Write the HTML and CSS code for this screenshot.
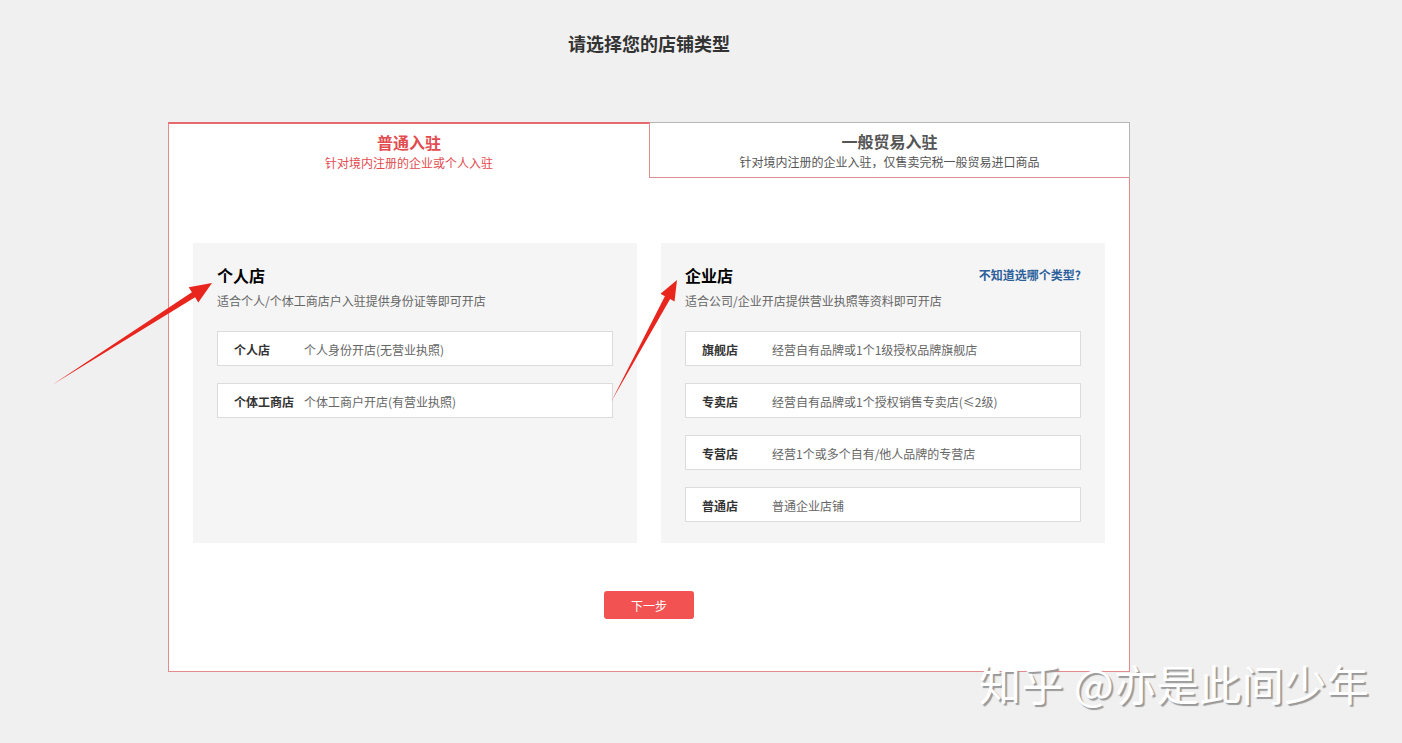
FILE: index.html
```html
<!DOCTYPE html>
<html lang="zh">
<head>
<meta charset="utf-8">
<title>请选择您的店铺类型</title>
<link rel="stylesheet" href="styles.css">
</head>
<body>
<div class="page">
  <h1 class="title">请选择您的店铺类型</h1>
  <div class="card">
    <div class="tabs">
      <div class="tab tab-active">
        <div class="tab-title">普通入驻</div>
        <div class="tab-sub">针对境内注册的企业或个人入驻</div>
      </div>
      <div class="tab tab-other">
        <div class="tab-title">一般贸易入驻</div>
        <div class="tab-sub">针对境内注册的企业入驻，仅售卖完税一般贸易进口商品</div>
      </div>
    </div>
    <div class="card-body">
      <div class="panels">
        <div class="panel">
          <div class="panel-head">
            <h2 class="panel-title">个人店</h2>
          </div>
          <p class="panel-desc">适合个人/个体工商店户入驻提供身份证等即可开店</p>
          <ul class="options">
            <li class="option"><span class="opt-name">个人店</span><span class="opt-desc">个人身份开店(无营业执照)</span></li>
            <li class="option"><span class="opt-name">个体工商店</span><span class="opt-desc">个体工商户开店(有营业执照)</span></li>
          </ul>
        </div>
        <div class="panel">
          <div class="panel-head">
            <h2 class="panel-title">企业店</h2>
            <a class="help-link">不知道选哪个类型?</a>
          </div>
          <p class="panel-desc">适合公司/企业开店提供营业执照等资料即可开店</p>
          <ul class="options">
            <li class="option"><span class="opt-name">旗舰店</span><span class="opt-desc">经营自有品牌或1个1级授权品牌旗舰店</span></li>
            <li class="option"><span class="opt-name">专卖店</span><span class="opt-desc">经营自有品牌或1个授权销售专卖店(≤2级)</span></li>
            <li class="option"><span class="opt-name">专营店</span><span class="opt-desc">经营1个或多个自有/他人品牌的专营店</span></li>
            <li class="option"><span class="opt-name">普通店</span><span class="opt-desc">普通企业店铺</span></li>
          </ul>
        </div>
      </div>
      <div class="actions">
        <button class="btn-next">下一步</button>
      </div>
    </div>
  </div>
</div>
<svg class="arrows" width="1402" height="743" viewBox="0 0 1402 743">
  <polygon points="52,385 195.1,297.3 198.3,302.4 212,283 188.7,287.2 191.9,292.3" fill="#e8261e"/>
  <polygon points="611,402 670.1,299 674.5,301.4 677,280 660.5,293.8 664.9,296.2" fill="#e8261e"/>
</svg>
<div class="watermark">知乎 @亦是此间少年</div>
</body>
</html>
```

FILE: styles.css
```css
* { box-sizing: border-box; }
html, body { margin: 0; padding: 0; }
body {
  background: #f0f0f0;
  font-family: "Noto Sans CJK SC", "Noto Sans", sans-serif;
  color: #333;
  width: 1402px;
  height: 743px;
  overflow: hidden;
  position: relative;
}
.page {
  padding-top: 32px;
}
.title {
  margin: 0;
  text-align: center;
  font-size: 18px;
  line-height: 22px;
  font-weight: bold;
  color: #333;
  width: 962px;
  margin-left: 168px;
}
.card {
  width: 962px;
  margin: 68px 0 0 168px;
}
.tabs {
  display: flex;
  height: 56px;
}
.tab {
  text-align: center;
  background: #fff;
}
.tab-active {
  width: 482px;
  border-top: 2px solid #e56a6d;
  border-left: 1px solid #e58a8d;
  border-right: 1px solid #e58a8d;
  padding-top: 8px;
  color: #e24b4f;
}
.tab-other {
  width: 480px;
  border-top: 1px solid #b5b5b5;
  border-right: 1px solid #b5b5b5;
  border-bottom: 1px solid #dd9093;
  padding-top: 8px;
  color: #555;
}
.tab-title {
  font-size: 16px;
  line-height: 20px;
  font-weight: bold;
}
.tab-sub {
  font-size: 12px;
  line-height: 16px;
  margin-top: 3px;
}
.card-body {
  background: #fff;
  border: 1px solid #e58a8d;
  border-top: none;
  padding: 65px 24px 51px 24px;
  height: 494px;
}
.panels {
  display: flex;
  gap: 24px;
}
.panel {
  width: 444px;
  height: 300px;
  background: #f5f5f5;
  padding: 21px 24px 21px 24px;
}
.panel-head {
  display: flex;
  justify-content: space-between;
  align-items: center;
  height: 22px;
}
.panel-title {
  margin: 0;
  font-size: 16px;
  line-height: 22px;
  font-weight: bold;
  color: #000;
}
.help-link {
  font-size: 12px;
  font-weight: bold;
  color: #2d5f9b;
  line-height: 16px;
  cursor: pointer;
}
.panel-desc {
  margin: 7px 0 0;
  font-size: 12px;
  line-height: 16px;
  color: #666;
}
.options {
  list-style: none;
  margin: 22px 0 0;
  padding: 0;
  display: flex;
  flex-direction: column;
  gap: 17px;
}
.option {
  display: flex;
  align-items: center;
  height: 35px;
  background: #fff;
  border: 1px solid #dcdcdc;
  padding-left: 16px;
  padding-top: 1px;
  font-size: 12px;
}
.opt-name {
  width: 60px;
  margin-right: 10px;
  font-weight: bold;
  color: #333;
  white-space: nowrap;
}
.opt-desc {
  color: #666;
  white-space: nowrap;
}
.actions {
  display: flex;
  justify-content: center;
  margin-top: 48px;
}
.btn-next {
  width: 90px;
  height: 28px;
  border: none;
  border-radius: 3px;
  background: #f25252;
  color: #fff;
  font-family: inherit;
  font-size: 12px;
  cursor: pointer;
}
.arrows {
  position: absolute;
  left: 0;
  top: 0;
  pointer-events: none;
}
.watermark {
  position: absolute;
  left: 979px;
  top: 656px;
  font-size: 42px;
  line-height: 54px;
  letter-spacing: 0.5px;
  color: #fff;
  text-shadow: 2px 2px 1px #999;
  white-space: nowrap;
  pointer-events: none;
}
```
